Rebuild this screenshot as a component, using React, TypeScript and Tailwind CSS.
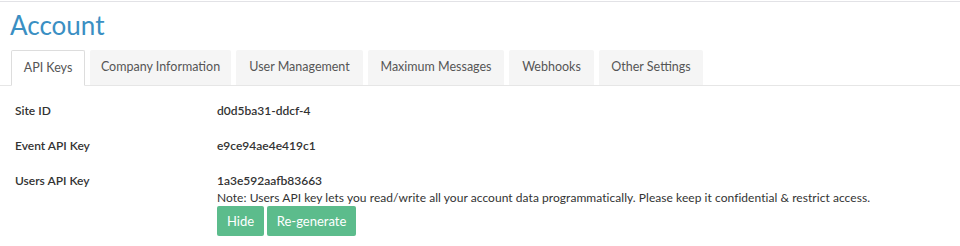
import React from "react";

const tabs = [
  { label: "API Keys", w: "w-[74px]", active: true },
  { label: "Company Information", w: "w-[141px]" },
  { label: "User Management", w: "w-[127px]" },
  { label: "Maximum Messages", w: "w-[136px]" },
  { label: "Webhooks", w: "w-[85px]" },
  { label: "Other Settings", w: "w-[104px]" },
];

export default function App() {
  return (
    <div
      className="w-[960px] h-[246px] bg-white overflow-hidden"
      style={{ fontFamily: "Lato, 'Open Sans', sans-serif" }}
    >
      <div className="mt-px border-t border-[#e2e2e6]" />
      <h1 className="pl-[10px] pt-[8px] text-[26px] leading-[31px] text-[#3a8fc3] font-normal">
        Account
      </h1>
      <div className="mt-[9px] flex items-end gap-[5px] pl-[11px] border-b border-[#e6e6e6] h-[36px]">
        {tabs.map((t) =>
          t.active ? (
            <div
              key={t.label}
              className={`${t.w} h-[36px] -mb-px flex items-center justify-center bg-white border border-[#dddddd] border-b-white rounded-t-[2px] text-[12.5px] text-[#555]`}
            >
              {t.label}
            </div>
          ) : (
            <div
              key={t.label}
              className={`${t.w} h-[35px] flex items-center justify-center bg-[#f5f5f5] rounded-t-[2px] text-[12.5px] text-[#555]`}
            >
              {t.label}
            </div>
          )
        )}
      </div>
      <div className="pl-[15px] pt-[17px] text-[12px] leading-[16px] text-[#333]">
        <div className="flex h-[35px] items-start">
          <div className="w-[202px] font-semibold">Site ID</div>
          <div className="whitespace-nowrap font-semibold">d0d5ba31-ddcf-4</div>
        </div>
        <div className="flex h-[35px] items-start">
          <div className="w-[202px] font-semibold">Event API Key</div>
          <div className="whitespace-nowrap font-semibold">e9ce94ae4e419c1</div>
        </div>
        <div className="flex items-start">
          <div className="w-[202px] font-semibold">Users API Key</div>
          <div className="flex flex-col">
            <div className="whitespace-nowrap font-semibold">1a3e592aafb83663</div>
            <div className="mt-px whitespace-nowrap tracking-[0.05px]">
              Note: Users API key lets you read/write all your account data programmatically. Please keep it confidential &amp; restrict access.
            </div>
            <div className="flex gap-[3px]">
              <button className="w-[47px] h-[30px] bg-[#5cbc8c] text-white text-[13px] rounded-[2px]">
                Hide
              </button>
              <button className="w-[89px] h-[30px] bg-[#5cbc8c] text-white text-[13px] rounded-[2px]">
                Re-generate
              </button>
            </div>
          </div>
        </div>
      </div>
    </div>
  );
}
